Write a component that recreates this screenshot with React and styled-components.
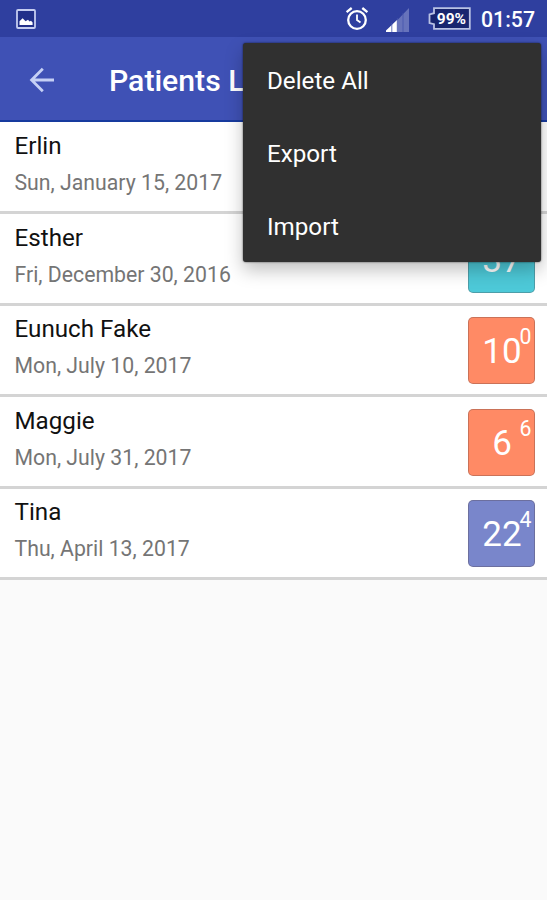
import React from 'react';
import styled, { createGlobalStyle } from 'styled-components';

const GlobalStyle = createGlobalStyle`
  * {
    box-sizing: border-box;
  }

  body {
    margin: 0;
    background: #fafafa;
    font-family: Roboto, "Liberation Sans", sans-serif;
  }
`;

const Screen = styled.div`
  position: relative;
  height: 900px;
  overflow: hidden;
  background: #fafafa;
`;

//-----------Status bar------------
const StatusBar = styled.header`
  display: flex;
  align-items: center;
  height: 37px;
  padding: 0 12px 0 16px;
  color: #fff;
  background: #2f3f9f;

  svg {
    display: block;
    flex: none;
  }
`;

const StatusIcons = styled.div`
  display: flex;
  align-items: center;
  margin-left: auto;
`;

const SignalSlot = styled.div`
  margin: 2px 19px 0 17px;
`;

const Battery = styled.div`
  position: relative;
  width: 43px;
  height: 23px;
`;

const BatteryLevel = styled.span`
  position: absolute;
  inset: 0 0 0 4px;
  font-size: 15.5px;
  font-weight: 700;
  line-height: 25px;
  text-align: center;
`;

const Clock = styled.span`
  margin-left: 10px;
  font-size: 21.3px;
  font-weight: 500;
  line-height: 37px;
  padding-top: 2px;
`;

//-----------Toolbar------------
const Toolbar = styled.div`
  display: flex;
  align-items: center;
  height: 85px;
  padding: 0 0 0 29px;
  border-bottom: 2px solid #173a9e;
  background: #3f51b5;
`;

const BackButton = styled.button`
  display: flex;
  padding: 2px 0 0;
  border: 0;
  background: none;
`;

const Title = styled.h1`
  margin: 0 0 0 54px;
  padding-top: 4px;
  color: #fff;
  font-size: 30.2px;
  font-weight: 500;
  line-height: 36px;
  white-space: nowrap;
`;

//-----------Patients------------
const List = styled.ul`
  margin: 0;
  padding: 1px 0 0;
  background: #fff;
  list-style: none;
`;

const Row = styled.li`
  display: flex;
  align-items: flex-start;
  justify-content: space-between;
  height: 91.4px;
  padding: 8.4px 12px 0 14.5px;
  border-bottom: 3px solid #d4d4d4;
`;

const Name = styled.div`
  color: #111;
  font-size: 24.2px;
  line-height: 30px;
`;

const VisitDate = styled.div`
  margin-top: 9px;
  color: #757575;
  font-size: 21.25px;
  line-height: 26px;
`;

const Badge = styled.div`
  position: relative;
  width: 67px;
  height: 67px;
  margin-top: 3px;
  padding-left: 1px;
  border: 1px solid rgba(80, 60, 60, 0.3);
  border-radius: 5px;
  color: #fff;
  background: ${(props) => props.$color};
  font-size: 35px;
  line-height: 67px;
  text-align: center;
`;

const BadgeDays = styled.span`
  position: absolute;
  top: 8px;
  right: 2.5px;
  font-size: 21.3px;
  line-height: 22px;
`;

//-----------Overflow menu------------
const Menu = styled.div`
  position: absolute;
  top: 43px;
  left: 243px;
  width: 298px;
  height: 219px;
  border-radius: 3px;
  background: #303030;
  box-shadow: 0 0 2px rgba(0, 0, 0, 0.7), 0 8px 18px rgba(0, 0, 0, 0.25);
`;

const MenuItem = styled.div`
  height: 73px;
  padding-left: 24px;
  color: #fff;
  font-size: 24.2px;
  line-height: 77px;
`;

const patients = [
  { name: 'Erlin', date: 'Sun, January 15, 2017' },
  { name: 'Esther', date: 'Fri, December 30, 2016', weeks: 37, color: '#4dc9d8' },
  { name: 'Eunuch Fake', date: 'Mon, July 10, 2017', weeks: 10, days: 0, color: '#ff8a65' },
  { name: 'Maggie', date: 'Mon, July 31, 2017', weeks: 6, days: 6, color: '#ff8a65' },
  { name: 'Tina', date: 'Thu, April 13, 2017', weeks: 22, days: 4, color: '#7986cb' },
];

const menuItems = ['Delete All', 'Export', 'Import'];

function PictureIcon() {
  return (
    <svg width="20" height="20" viewBox="0 0 20 20">
      <rect x="1" y="1" width="18" height="18" rx="1" fill="#22308a" stroke="#c5cdf0" strokeWidth="1.8" />
      <path d="M3.5 16V12.2L6.6 9.2L9.6 12.2L12 10.8L13.6 12.6L15 11.8L16.6 13.4V16Z" fill="#fff" />
    </svg>
  );
}

function AlarmIcon() {
  return (
    <svg width="24" height="25" viewBox="0 0 24 25" fill="none" stroke="#fff">
      <circle cx="12" cy="14" r="8.8" strokeWidth="2.3" />
      <path d="M12 8.5V14L15.5 16.5" strokeWidth="1.8" />
      <path d="M1.6 6.2L6.7 2M22.4 6.2L17.3 2" strokeWidth="2.3" />
    </svg>
  );
}

function SignalIcon() {
  return (
    <svg width="23" height="24" viewBox="0 0 23 24">
      <path d="M11.5 12L23 0V24H11.5Z" fill="#6773bb" />
      <path d="M0 24V22.5L11.5 11.5V24Z" fill="#fff" />
      <path d="M5.8 15V24M11.3 10V24M17 5V24" stroke="#4454ac" strokeWidth="0.8" />
    </svg>
  );
}

function BatteryIcon() {
  return (
    <svg width="43" height="23" viewBox="0 0 43 23">
      <path d="M6 1.2H41.8V21.8H6V17.2L1.5 16V7.5L6 6.2Z" fill="#18256f" stroke="#b9c2e4" strokeWidth="1.8" />
    </svg>
  );
}

function BackIcon() {
  return (
    <svg width="26" height="26" viewBox="0 0 26 26" fill="none" stroke="#c5d0f5" strokeWidth="2.8">
      <path d="M25 13H3M13.8 1.8L2.6 13L13.8 24.2" />
    </svg>
  );
}

function PatientRow({ patient }) {
  return (
    <Row>
      <div>
        <Name>{patient.name}</Name>
        <VisitDate>{patient.date}</VisitDate>
      </div>
      {patient.weeks !== undefined && (
        <Badge $color={patient.color}>
          {patient.weeks}
          {patient.days !== undefined && <BadgeDays>{patient.days}</BadgeDays>}
        </Badge>
      )}
    </Row>
  );
}

export default function App() {
  return (
    <Screen>
      <GlobalStyle />
      <StatusBar>
        <PictureIcon />
        <StatusIcons>
          <AlarmIcon />
          <SignalSlot>
            <SignalIcon />
          </SignalSlot>
          <Battery>
            <BatteryIcon />
            <BatteryLevel>99%</BatteryLevel>
          </Battery>
          <Clock>01:57</Clock>
        </StatusIcons>
      </StatusBar>
      <Toolbar>
        <BackButton aria-label="Back">
          <BackIcon />
        </BackButton>
        <Title>Patients List</Title>
      </Toolbar>
      <List>
        {patients.map((patient) => (
          <PatientRow key={patient.name} patient={patient} />
        ))}
      </List>
      <Menu>
        {menuItems.map((item) => (
          <MenuItem key={item}>{item}</MenuItem>
        ))}
      </Menu>
    </Screen>
  );
}
